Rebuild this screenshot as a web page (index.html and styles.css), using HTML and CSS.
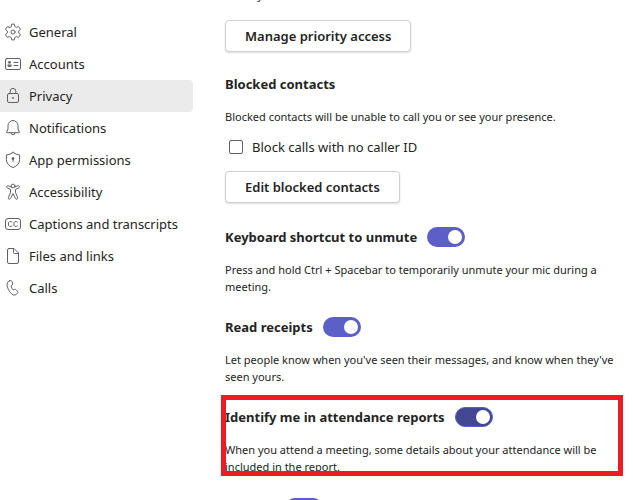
FILE: index.html
```
<!DOCTYPE html>
<html lang="en">
<head>
    <meta charset="UTF-8">
    <meta name="viewport" content="width=device-width, initial-scale=1.0">
    <title>Settings - Privacy</title>
    <link rel="stylesheet" href="styles.css">
</head>
<body>
    <div class="settings">
        <nav class="side-nav">
            <a class="nav-item" href="#general">
                <svg class="icon" viewBox="0 0 18 18"><path d="M7.3 3.4 7.7 1.2Q9 .8 10.3 1.2L10.7 3.4 12.4 4.4 14.5 3.6Q15.9 4.8 16.4 6.5L14.7 8V10L16.4 11.5Q15.9 13.2 14.5 14.4L12.4 13.6 10.7 14.6 10.3 16.8Q9 17.2 7.7 16.8L7.3 14.6 5.6 13.6 3.5 14.4Q2.1 13.2 1.6 11.5L3.3 10V8L1.6 6.5Q2.1 4.8 3.5 3.6L5.6 4.4Z"/><circle cx="9" cy="9" r="2"/></svg>
                General
            </a>
            <a class="nav-item" href="#accounts">
                <svg class="icon" viewBox="0 0 18 18"><rect x="1.5" y="3.5" width="15" height="11" rx="1.5"/><circle class="fill" cx="5.5" cy="7.3" r="1.4"/><path class="fill" d="M3.5 9.5h4v1q0 1.5-2 1.5t-2-1.5z"/><path d="M10 7.5h4M10 10.5h4"/></svg>
                Accounts
            </a>
            <a class="nav-item active" href="#privacy">
                <svg class="icon" viewBox="0 0 18 18"><rect x="3.5" y="6.5" width="11" height="9" rx="1.5"/><path d="M6.2 6.5V4.2a2.8 2.8 0 0 1 5.6 0v2.3"/><circle class="fill" cx="9" cy="11" r=".9"/></svg>
                Privacy
            </a>
            <a class="nav-item" href="#notifications">
                <svg class="icon" viewBox="0 0 18 18"><path d="M9 1.5A5 5 0 0 0 4 6.5V10L2.6 13.1Q2.4 13.7 3 13.7H15Q15.6 13.7 15.4 13.1L14 10V6.5A5 5 0 0 0 9 1.5ZM7 13.8a2 2 0 0 0 4 0"/></svg>
                Notifications
            </a>
            <a class="nav-item" href="#permissions">
                <svg class="icon" viewBox="0 0 18 18"><path d="M9 1.5Q12 3.7 15.6 3.9V8.5Q15.6 14 9 16.6 2.4 14 2.4 8.5V3.9Q6 3.7 9 1.5Z"/><circle class="fill" cx="9" cy="7.6" r="1.4"/><path d="M9 8v2.5"/></svg>
                App permissions
            </a>
            <a class="nav-item" href="#accessibility">
                <svg class="icon" viewBox="0 0 18 18"><circle cx="9" cy="3" r="1.9"/><path d="M7.2 4 4.3 2.8Q3 2.4 2.6 3.5 2.4 4.5 3.5 5L6.5 6.4V9.5L4.4 14.6Q4 15.8 5 16.2 6.1 16.5 6.6 15.4L9 10.6 11.4 15.4Q11.9 16.5 13 16.2 14 15.8 13.6 14.6L11.5 9.5V6.4L14.5 5Q15.6 4.5 15.4 3.5 15 2.4 13.7 2.8L10.8 4"/></svg>
                Accessibility
            </a>
            <a class="nav-item" href="#captions">
                <svg class="icon" viewBox="0 0 18 18"><rect x="1.5" y="3.5" width="15" height="11" rx="2.5"/><path d="M8 7.2A2 2 0 0 0 4.5 9 2 2 0 0 0 8 10.8M13.5 7.2A2 2 0 0 0 10 9a2 2 0 0 0 3.5 1.8"/></svg>
                Captions and transcripts
            </a>
            <a class="nav-item" href="#files">
                <svg class="icon" viewBox="0 0 18 18"><path d="M5 1.5H10L14.5 6V15Q14.5 16.5 13 16.5H5Q3.5 16.5 3.5 15V3Q3.5 1.5 5 1.5ZM9.5 1.5V5.5Q9.5 6.5 10.5 6.5H14.5"/></svg>
                Files and links
            </a>
            <a class="nav-item" href="#calls">
                <svg class="icon" viewBox="0 0 18 18"><path d="M5.3 1.9 6.2 1.6Q7.5 1.3 8 2.6L8.6 4.2Q8.9 5.2 8.2 6L7 7.1Q7.5 9 9.1 10.8L10.6 10.4Q11.7 10.1 12.4 11L13.6 12.5Q14.3 13.5 13.4 14.4L12.7 15.1Q11.3 16.6 9.3 15.9 5 14 3.2 7.2 2.4 3.2 5.3 1.9Z"/></svg>
                Calls
            </a>
        </nav>

        <main class="content">
            <p class="hint">directly</p>
            <button class="btn">Manage priority access</button>

            <section class="blocked">
                <h2>Blocked contacts</h2>
                <p>Blocked contacts will be unable to call you or see your presence.</p>
                <label class="check-row"><input type="checkbox" class="check">Block calls with no caller ID</label>
                <button class="btn">Edit blocked contacts</button>
            </section>

            <section class="option">
                <div class="option-head">
                    <h2><label for="unmute">Keyboard shortcut to unmute</label></h2>
                    <input type="checkbox" class="toggle" id="unmute" checked>
                </div>
                <p>Press and hold Ctrl + Spacebar to temporarily unmute your mic during a meeting.</p>
            </section>

            <section class="option">
                <div class="option-head">
                    <h2><label for="receipts">Read receipts</label></h2>
                    <input type="checkbox" class="toggle" id="receipts" checked>
                </div>
                <p>Let people know when you've seen their messages, and know when they've seen yours.</p>
            </section>

            <section class="option marked">
                <div class="option-head">
                    <h2><label for="attendance">Identify me in attendance reports</label></h2>
                    <input type="checkbox" class="toggle hovered" id="attendance" checked>
                </div>
                <p>When you attend a meeting, some details about your attendance will be included in the report.</p>
            </section>

            <section class="option">
                <div class="option-head">
                    <h2><label for="surveys">Surveys</label></h2>
                    <input type="checkbox" class="toggle" id="surveys" checked>
                </div>
            </section>
        </main>
    </div>
</body>
</html>
```
FILE: styles.css
```
* {
    box-sizing: border-box;
}
body {
    margin: 0;
    height: 100vh;
    overflow: hidden;
    font-family: "Noto Sans", "Open Sans", sans-serif;
    font-size: 13px;
    color: #242424;
    background-color: #fff;
}
.settings {
    display: flex;
    gap: 32px;
}
.side-nav {
    flex: 0 0 193px;
    padding-top: 16px;
}
.nav-item {
    display: flex;
    align-items: center;
    gap: 7px;
    height: 32px;
    padding-left: 4px;
    color: #242424;
    text-decoration: none;
    white-space: nowrap;
}
.nav-item.active {
    background-color: #ebebeb;
    border-radius: 0 4px 4px 0;
}
.icon {
    width: 18px;
    height: 18px;
    fill: none;
    stroke: #616161;
    stroke-width: 1;
    stroke-linejoin: round;
    stroke-linecap: round;
}
.icon .fill {
    fill: #616161;
    stroke: none;
}
.content {
    flex: 1;
    min-width: 0;
    padding-right: 10px;
    /* scrolled, the hint above the first button is cut off */
    margin-top: -14px;
}
h2 {
    margin: 0;
    font-size: 13px;
    font-weight: 700;
    line-height: 20px;
}
p {
    margin: 0;
    font-size: 11px;
    line-height: 17px;
}
.hint {
    margin-bottom: 17px;
}
.btn {
    display: block;
    height: 32px;
    padding: 0 19px;
    font-family: inherit;
    font-size: 13px;
    font-weight: 600;
    color: #242424;
    background-color: #fff;
    border: 1px solid #d1d1d1;
    border-radius: 4px;
    box-shadow: 0 1px 2px rgba(0, 0, 0, 0.14);
}
.blocked {
    margin-top: 22px;
    margin-bottom: 24px;
}
.blocked h2 {
    margin-bottom: 14px;
}
.check-row {
    display: flex;
    align-items: center;
    gap: 9px;
    height: 32px;
    margin: 6px 0 8px;
    padding-left: 4px;
}
.check {
    appearance: none;
    width: 14px;
    height: 14px;
    margin: 0;
    border: 1px solid #616161;
    border-radius: 2px;
}
.option {
    position: relative;
    margin-bottom: 22px;
}
.option-head {
    display: flex;
    align-items: center;
    gap: 10px;
    margin-bottom: 14px;
}
.toggle {
    appearance: none;
    display: flex;
    align-items: center;
    justify-content: flex-end;
    width: 38px;
    height: 20px;
    margin: 0;
    padding-right: 3px;
    background-color: #5b5fc7;
    border-radius: 10px;
}
.toggle::before {
    content: "";
    width: 14px;
    height: 14px;
    background-color: #fff;
    border-radius: 50%;
}
.toggle.hovered {
    background-color: #444791;
    border: 1px solid #5b5fc7;
    padding-right: 2px;
}
.marked {
    margin-bottom: 23px;
}
.marked::after {
    content: "";
    position: absolute;
    top: -12px;
    right: 0;
    bottom: -1px;
    left: -4px;
    border: 5px solid #ed1c24;
    pointer-events: none;
}
```
